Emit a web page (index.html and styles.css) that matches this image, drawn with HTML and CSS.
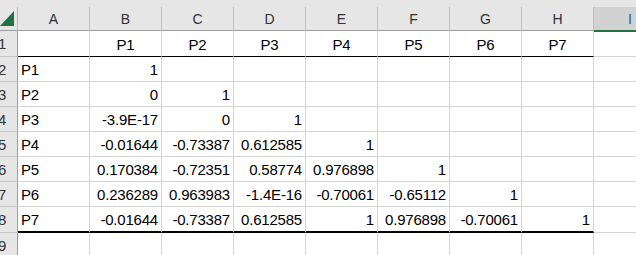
FILE: index.html
```html
<!DOCTYPE html>
<html>
<head>
<meta charset="utf-8">
<link rel="stylesheet" href="styles.css">
</head>
<body>
<div class="sheet">
  <div class="band"></div>
  <div class="grid">
    <div class="corner"><svg class="tri" width="17" height="23" viewBox="0 0 17 23"><polygon points="0,19 14,19 14,4" fill="#217346"/></svg></div>
    <div class="h">A</div><div class="h">B</div><div class="h">C</div><div class="h">D</div><div class="h">E</div><div class="h">F</div><div class="h">G</div><div class="h">H</div><div class="h sel">I</div>

    <div class="r"><span>1</span></div>
    <div class="c u"></div><div class="c m u">P1</div><div class="c m u">P2</div><div class="c m u">P3</div><div class="c m u">P4</div><div class="c m u">P5</div><div class="c m u">P6</div><div class="c m u">P7</div><div class="c selc"></div>

    <div class="r"><span>2</span></div>
    <div class="c t">P1</div><div class="c n">1</div><div class="c"></div><div class="c"></div><div class="c"></div><div class="c"></div><div class="c"></div><div class="c"></div><div class="c"></div>

    <div class="r"><span>3</span></div>
    <div class="c t">P2</div><div class="c n">0</div><div class="c n">1</div><div class="c"></div><div class="c"></div><div class="c"></div><div class="c"></div><div class="c"></div><div class="c"></div>

    <div class="r"><span>4</span></div>
    <div class="c t">P3</div><div class="c n">-3.9E-17</div><div class="c n">0</div><div class="c n">1</div><div class="c"></div><div class="c"></div><div class="c"></div><div class="c"></div><div class="c"></div>

    <div class="r"><span>5</span></div>
    <div class="c t">P4</div><div class="c n">-0.01644</div><div class="c n">-0.73387</div><div class="c n">0.612585</div><div class="c n">1</div><div class="c"></div><div class="c"></div><div class="c"></div><div class="c"></div>

    <div class="r"><span>6</span></div>
    <div class="c t">P5</div><div class="c n">0.170384</div><div class="c n">-0.72351</div><div class="c n">0.58774</div><div class="c n">0.976898</div><div class="c n">1</div><div class="c"></div><div class="c"></div><div class="c"></div>

    <div class="r"><span>7</span></div>
    <div class="c t">P6</div><div class="c n">0.236289</div><div class="c n">0.963983</div><div class="c n">-1.4E-16</div><div class="c n">-0.70061</div><div class="c n">-0.65112</div><div class="c n">1</div><div class="c"></div><div class="c"></div>

    <div class="r"><span>8</span></div>
    <div class="c t b">P7</div><div class="c n b">-0.01644</div><div class="c n b">-0.73387</div><div class="c n b">0.612585</div><div class="c n b">1</div><div class="c n b">0.976898</div><div class="c n b">-0.70061</div><div class="c n b">1</div><div class="c"></div>

    <div class="r"><span>9</span></div>
    <div class="c"></div><div class="c"></div><div class="c"></div><div class="c"></div><div class="c"></div><div class="c"></div><div class="c"></div><div class="c"></div><div class="c"></div>
  </div>
</div>
</body>
</html>
```

FILE: styles.css
```css
html, body {
  margin: 0;
  padding: 0;
  background: #ffffff;
  overflow: hidden;
}

.sheet {
  width: 636px;
  height: 255px;
  overflow: hidden;
  font-family: "Liberation Sans", Arial, sans-serif;
  font-size: 15px;
  color: #000;
}

.band {
  height: 7px;
  background: #e6e6e6;
}

.grid {
  display: grid;
  grid-template-columns: 18px repeat(8, 72px) 72px;
  grid-template-rows: 24px 26px repeat(6, 25px) 26px 25px;
}

.grid > div {
  box-sizing: border-box;
  overflow: hidden;
  white-space: nowrap;
}

.corner {
  background: #e6e6e6;
  border-right: 1px solid #bdbdbd;
  border-bottom: 1px solid #9e9e9e;
}

.tri {
  display: block;
}

.h {
  background: #e6e6e6;
  border-right: 1px solid #bfbfbf;
  border-bottom: 1px solid #9e9e9e;
  color: #333;
  font-size: 14px;
  display: flex;
  align-items: center;
  justify-content: center;
  padding-top: 1px;
}

.h.sel {
  background: #d2d2d2;
  border-bottom: 1px solid #217346;
  border-right: none;
  color: #1d5c8c;
}

.r {
  background: #e6e6e6;
  border-right: 1px solid #9e9e9e;
  border-bottom: 1px solid #c8c8c8;
  color: #333;
  display: flex;
  align-items: center;
}

.r span {
  margin-left: -2px;
}

.c {
  background: #fff;
  border-right: 1px solid #d4d4d4;
  border-bottom: 1px solid #d4d4d4;
  display: flex;
  align-items: center;
  padding-top: 1px;
  letter-spacing: -0.2px;
}

.c.n {
  justify-content: flex-end;
  padding-right: 3px;
}

.c.t {
  padding-left: 3px;
}

.c.m {
  justify-content: center;
}

.c.u {
  border-bottom: 1px solid #000;
}

.c.b {
  border-bottom: 2px solid #000;
}

.c.selc {
  border-top: 1px solid #217346;
  border-right: none;
}
```
